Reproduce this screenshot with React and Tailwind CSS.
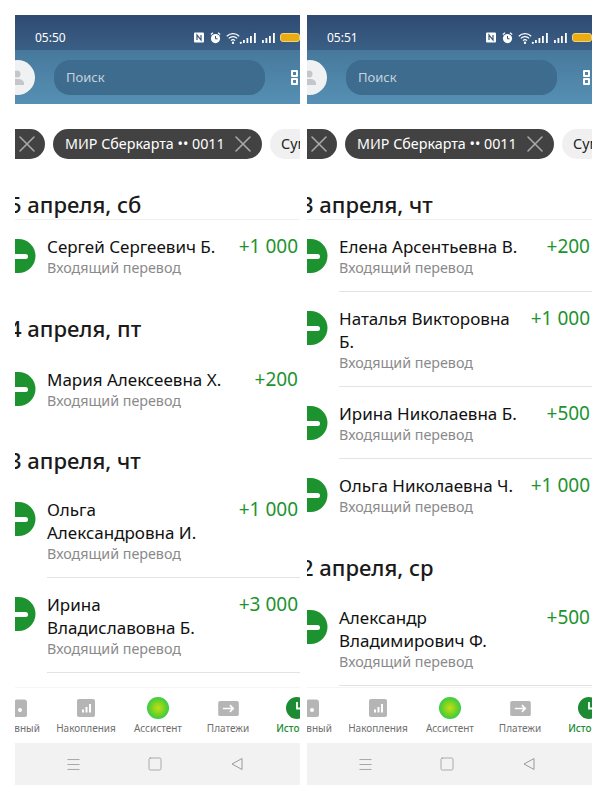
import { Menu, Square, X } from "lucide-react";

const leftGroups = [
  {
    date: "5 апреля, сб",
    top: "mt-[32px]",
    head: "pb-[1px] border-b border-[#f0f0f0]",
    rows: [{ name: "Сергей Сергеевич Б.", amount: "+1 000" }],
  },
  {
    date: "4 апреля, пт",
    top: "mt-[24px]",
    head: "pb-[11px]",
    rows: [{ name: "Мария Алексеевна Х.", amount: "+200" }],
  },
  {
    date: "3 апреля, чт",
    top: "mt-[23px]",
    head: "pb-[9px]",
    more: true,
    rows: [
      { name: "Ольга Александровна И.", amount: "+1 000" },
      { name: "Ирина Владиславовна Б.", amount: "+3 000" },
    ],
  },
];

const rightGroups = [
  {
    date: "3 апреля, чт",
    top: "mt-[32px]",
    head: "pb-[1px] border-b border-[#f0f0f0]",
    rows: [
      { name: "Елена Арсентьевна В.", amount: "+200" },
      { name: "Наталья Викторовна Б.", amount: "+1 000" },
      { name: "Ирина Николаевна Б.", amount: "+500" },
      { name: "Ольга Николаевна Ч.", amount: "+1 000" },
    ],
  },
  {
    date: "2 апреля, ср",
    top: "mt-[24px]",
    head: "pb-[10px]",
    more: true,
    rows: [{ name: "Александр Владимирович Ф.", amount: "+500" }],
  },
];

function Signal() {
  return (
    <svg width="15" height="10" viewBox="0 0 15 10" fill="white">
      <rect x="0" y="7" width="1.8" height="3" />
      <rect x="3.5" y="5" width="1.8" height="5" />
      <rect x="7" y="3" width="1.8" height="7" />
      <rect x="11" y="0" width="1.8" height="10" />
    </svg>
  );
}

function StatusIcons() {
  return (
    <div className="flex items-center text-white">
      <svg width="10" height="11" viewBox="0 0 10 11">
        <rect x="0" y="0.5" width="10" height="10" rx="1" fill="white" />
        <path d="M3 8V3l4 5V3" stroke="#34557c" strokeWidth="1.2" fill="none" />
      </svg>
      <svg width="11" height="12" viewBox="0 0 11 12" className="ml-[6px]">
        <circle cx="5.5" cy="6.6" r="4.6" fill="white" />
        <path d="M.8 2.4l2.2-1.6M10.2 2.4L8 .8" stroke="white" strokeWidth="1.2" />
        <path d="M5.5 4v2.8h2" stroke="#34557c" fill="none" />
      </svg>
      <svg width="16" height="12" viewBox="0 0 16 12" fill="none" stroke="white" strokeWidth="1.2" className="ml-[5px]">
        <path d="M.8 4.2a9 9 0 0 1 12.4 0M2.8 6.4a6 6 0 0 1 8.4 0M5 8.6a3 3 0 0 1 4 0" />
        <circle cx="7" cy="10.8" r=".6" fill="white" />
        <circle cx="14.8" cy="10.8" r=".5" fill="white" />
      </svg>
      <div className="ml-[1px]">
        <Signal />
      </div>
      <div className="ml-[4px]">
        <Signal />
      </div>
      <div className="ml-[3px] h-[9px] w-[20px] shrink-0 rounded-[3px] border border-[#f0d27a] bg-[#e9ad13]" />
    </div>
  );
}

function Header({ time }) {
  return (
    <div className="h-[89px] shrink-0 bg-gradient-to-b from-[#3d6a8d] to-[#5690b4]">
      <div className="flex h-[35px] items-center justify-between bg-gradient-to-b from-[#2f4a72] to-[#3a5f85] pl-[20px]">
        <span className="pt-[10px] text-[12px] text-white">{time}</span>
        <div className="pt-[10px]">
          <StatusIcons />
        </div>
      </div>
      <div className="mt-[10px] flex items-center">
        <div className="ml-[-15px] flex h-[35px] w-[35px] shrink-0 items-center justify-center rounded-full bg-[#f0f1f3]">
          <svg width="14" height="16" viewBox="0 0 14 16" fill="#c4c6ca" className="ml-[-2px]">
            <circle cx="7" cy="4" r="3.5" />
            <path d="M0 15a5 5 0 0 1 5-6h4a5 5 0 0 1 5 6z" />
          </svg>
        </div>
        <div className="ml-[19px] flex h-[35px] w-[211px] shrink-0 items-center rounded-[16px] bg-[#3d6c8e] pl-[12px] text-[13px] text-[#c4d3de]">
          Поиск
        </div>
        <div className="ml-[26px] grid shrink-0 grid-cols-2 gap-x-[3px] gap-y-[1px]">
          <div className="h-[7px] w-[7px] rounded-[1px] border-2 border-white" />
          <div className="h-[7px] w-[7px] rounded-[1px] border-2 border-white" />
          <div className="h-[7px] w-[7px] rounded-[1px] border-2 border-white" />
          <div className="h-[7px] w-[7px] rounded-[1px] border-2 border-white" />
        </div>
      </div>
    </div>
  );
}

function Chips() {
  return (
    <div className="mt-[25px] flex h-[30px] shrink-0 items-center gap-[8px]">
      <div className="ml-[-20px] flex h-full w-[50px] shrink-0 items-center justify-end rounded-full bg-[#424242] pr-[4px]">
        <X size={28} strokeWidth={1.3} className="text-[#a9a9a9]" />
      </div>
      <div className="flex h-full w-[209px] shrink-0 items-center rounded-full bg-[#424242] pl-[12px] pr-[5px] text-[14.3px] text-white">
        <span className="w-[159px] shrink-0 whitespace-nowrap">МИР Сберкарта •• 0011</span>
        <X size={28} strokeWidth={1.3} className="ml-[5px] shrink-0 text-[#a9a9a9]" />
      </div>
      <div className="flex h-full w-[60px] shrink-0 items-center rounded-full bg-[#f0f0f0] pl-[11px] text-[14.3px] text-[#222]">
        Сумма
      </div>
    </div>
  );
}

function SberLogo() {
  return (
    <svg width="22" height="34" viewBox="0 0 22 34" className="shrink-0">
      <path d="M0 0h3.5a17 17 0 0 1 0 34H0z" fill="#1d9330" />
      <path d="M0 15h10.5a2.5 2.5 0 0 1 0 5H0z" fill="white" />
    </svg>
  );
}

function Row({ row, line }) {
  return (
    <div className="flex items-start">
      <div className="flex w-[32px] shrink-0 pt-[19px]">
        <SberLogo />
      </div>
      <div className={`flex min-w-0 flex-1 items-start justify-between pt-[15px] ${line ? "border-b border-[#e3e3e3] pb-[14px]" : "pb-[14px]"}`}>
        <div className="w-[180px] shrink-0">
          <div className="text-[17px] leading-[23px] text-[#111]">{row.name}</div>
          <div className="text-[14.3px] leading-[19px] text-[#8a8a8a]">Входящий перевод</div>
        </div>
        <div className="whitespace-nowrap pr-[2px] text-[19px] leading-[23px] text-[#1d9330]">{row.amount}</div>
      </div>
    </div>
  );
}

function NavItem({ label, width, active, children }) {
  return (
    <div className={`flex shrink-0 flex-col items-center ${width}`}>
      <div className="flex h-[24px] items-center justify-center">{children}</div>
      <div className={`mt-[1px] whitespace-nowrap text-[10px] leading-[14px] ${active ? "font-medium text-[#1d8a34]" : "text-[#6f6f6f]"}`}>
        {label}
      </div>
    </div>
  );
}

function BottomNav() {
  return (
    <div className="h-[56px] shrink-0 border-t border-[#f5f5f5] bg-white pt-[8px]">
      <div className="ml-[-30px] flex">
        <NavItem label="Главный" width="w-[68px]">
          <svg width="18" height="18" viewBox="0 0 18 18">
            <path d="M0 7l6-6.5h8a3 3 0 0 1 3 3V16a2 2 0 0 1-2 2H2a2 2 0 0 1-2-2z" fill="#b5b5b5" />
            <circle cx="10" cy="11" r="2" fill="white" />
          </svg>
        </NavItem>
        <NavItem label="Накопления" width="w-[66px]">
          <svg width="18" height="18" viewBox="0 0 18 18">
            <rect width="18" height="18" rx="2" fill="#b5b5b5" />
            <path d="M5 10.5h2v3H5zM8.5 8h2v5.5h-2zM12 5h2v8.5h-2z" fill="white" />
          </svg>
        </NavItem>
        <NavItem label="Ассистент" width="w-[78px]">
          <div className="h-[22px] w-[22px] rounded-full bg-[radial-gradient(circle,#c6dc1a_0%,#6fd322_45%,#19c56b_85%,#12b8a0_100%)]" />
        </NavItem>
        <NavItem label="Платежи" width="w-[62px]">
          <svg width="21" height="15" viewBox="0 0 22 16">
            <rect width="22" height="16" rx="2" fill="#b5b5b5" />
            <path d="M5 8h11M12.5 4.5L16 8l-3.5 3.5" stroke="white" strokeWidth="1.8" fill="none" />
          </svg>
        </NavItem>
        <NavItem label="История" width="w-[76px]" active>
          <svg width="22" height="22" viewBox="0 0 22 22">
            <circle cx="11" cy="11" r="11" fill="#1d8a34" />
            <path d="M11 5v6.5h4" stroke="white" strokeWidth="1.8" fill="none" />
          </svg>
        </NavItem>
      </div>
    </div>
  );
}

function SystemBar() {
  return (
    <div className="flex h-[42px] shrink-0 items-center bg-[#f3f2f3] text-[#9a9a9a]">
      <Menu size={17} strokeWidth={1.2} className="ml-[50px]" />
      <Square size={16} strokeWidth={1.2} className="ml-[65px]" />
      <svg width="12" height="14" viewBox="0 0 12 14" fill="none" stroke="currentColor" className="ml-[68px]">
        <path d="M11 1.5v11L1 7z" />
      </svg>
    </div>
  );
}

function Phone({ time, groups }) {
  return (
    <div className="flex h-[770px] w-[285px] shrink-0 flex-col overflow-hidden bg-white">
      <Header time={time} />
      <Chips />
      <div className="min-h-0 flex-1 overflow-hidden">
        {groups.map((group) => (
          <div key={group.date} className={group.top}>
            <div className={`ml-[-6px] text-[22px] font-medium leading-[27px] text-[#1a1a1a] ${group.head}`}>
              {group.date}
            </div>
            {group.rows.map((row, idx) => (
              <Row key={row.name} row={row} line={group.more || idx < group.rows.length - 1} />
            ))}
          </div>
        ))}
      </div>
      <BottomNav />
      <SystemBar />
    </div>
  );
}

export default function App() {
  return (
    <div className="flex h-[800px] gap-[7px] bg-white pl-[15px] pt-[15px] font-['Noto_Sans',sans-serif]">
      <Phone time="05:50" groups={leftGroups} />
      <Phone time="05:51" groups={rightGroups} />
    </div>
  );
}
